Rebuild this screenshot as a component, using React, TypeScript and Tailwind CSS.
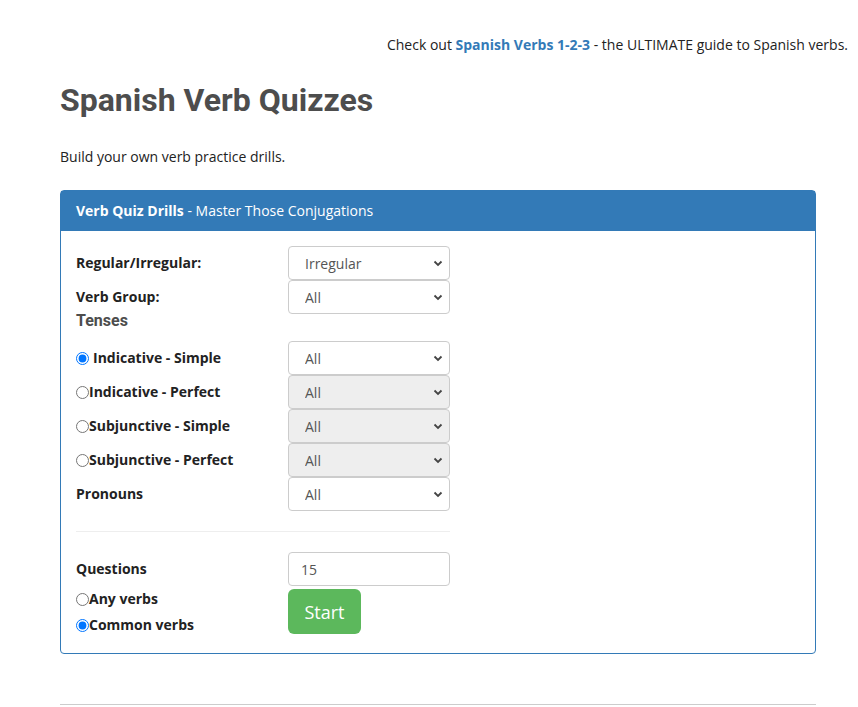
import { useState } from 'react';

const SANS = "font-['Open_Sans',sans-serif]";

const TENSES = [
  'Indicative - Simple',
  'Indicative - Perfect',
  'Subjunctive - Simple',
  'Subjunctive - Perfect'
];

function Chevron() {
  return (
    <svg
      className="pointer-events-none absolute right-[7px] top-1/2 -translate-y-1/2"
      width="10"
      height="8"
      viewBox="0 0 10 8"
    >
      <path d="M1.5 2.5 L5 6 L8.5 2.5" fill="none" stroke="#444" strokeWidth="1.8" />
    </svg>
  );
}

function Select({ value, disabled = false }: { value: string; disabled?: boolean }) {
  return (
    <div className="relative h-[34px] w-[162px]">
      <select
        defaultValue={value}
        disabled={disabled}
        className={`h-full w-full appearance-none rounded-[4px] border border-[#ccc] pl-[16px] pt-[2px] text-[14px] text-[#555] outline-none ${SANS} ${
          disabled ? 'bg-[#eee]' : 'bg-white'
        }`}
      >
        <option>{value}</option>
      </select>
      <Chevron />
    </div>
  );
}

function Row({ label, children }: { label: React.ReactNode; children: React.ReactNode }) {
  return (
    <div className="flex h-[34px] items-center">
      <div className="w-[212px] text-[14px] font-bold text-[#222]">{label}</div>
      {children}
    </div>
  );
}

export default function App() {
  const [tense, setTense] = useState(0);
  const [verbs, setVerbs] = useState('common');

  return (
    <div className={`min-h-[707px] bg-white text-[14px] leading-[20px] text-[#222] ${SANS}`}>
      <p className="pr-[10px] pt-[35px] text-right">
        Check out{' '}
        <a className="font-bold text-[#337ab7]" href="#">
          Spanish Verbs 1-2-3
        </a>{' '}
        - the ULTIMATE guide to Spanish verbs.
      </p>

      <main className="ml-[60px] w-[756px]">
        <h1 className="mt-[28px] font-['Roboto',sans-serif] text-[32px] font-bold leading-[35px] text-[#4d4d4d]">
          Spanish Verb Quizzes
        </h1>
        <p className="mt-[29px]">Build your own verb practice drills.</p>

        <section className="mt-[23px] rounded-[4px] border border-[#337ab7]">
          <div className="bg-[#337ab7] px-[15px] py-[10px] text-white">
            <b>Verb Quiz Drills</b> - Master Those Conjugations
          </div>

          <div className="w-[404px] px-[15px] pb-[15px] pt-[15px]">
            <Row label="Regular/Irregular:">
              <Select value="Irregular" />
            </Row>
            <Row label="Verb Group:">
              <Select value="All" />
            </Row>
            <h5 className="-mt-[3px] h-[30px] font-['Roboto',sans-serif] text-[16px] font-bold leading-[20px] text-[#4d4d4d]">
              Tenses
            </h5>

            {TENSES.map((name, i) => (
              <Row
                key={name}
                label={
                  <label className="flex items-center">
                    <input
                      type="radio"
                      name="tense"
                      checked={tense === i}
                      onChange={() => setTense(i)}
                      className={`m-0 h-[13px] w-[13px] ${tense === i ? 'mr-[4px]' : ''}`}
                    />
                    {name}
                  </label>
                }
              >
                <Select value="All" disabled={tense !== i} />
              </Row>
            ))}

            <Row label="Pronouns">
              <Select value="All" />
            </Row>

            <hr className="my-[20px] border-t border-[#eee]" />

            <Row label="Questions">
              <input
                defaultValue="15"
                className={`h-[34px] w-[162px] rounded-[4px] border border-[#ccc] px-[12px] text-[14px] text-[#555] outline-none ${SANS}`}
              />
            </Row>

            <div className="flex items-start">
              <div className="w-[212px] font-bold">
                {[
                  ['any', 'Any verbs'],
                  ['common', 'Common verbs']
                ].map(([key, text]) => (
                  <label key={key} className="flex h-[26px] items-center">
                    <input
                      type="radio"
                      name="verbs"
                      checked={verbs === key}
                      onChange={() => setVerbs(key)}
                      className="m-0 h-[13px] w-[13px]"
                    />
                    {text}
                  </label>
                ))}
              </div>
              <button className="mt-[3px] h-[45px] w-[73px] rounded-[6px] bg-[#5cb85c] text-[18px] leading-[24px] text-white">
                Start
              </button>
            </div>
          </div>
        </section>

        <hr className="mt-[50px] border-t border-[#ccc]" />
      </main>
    </div>
  );
}
